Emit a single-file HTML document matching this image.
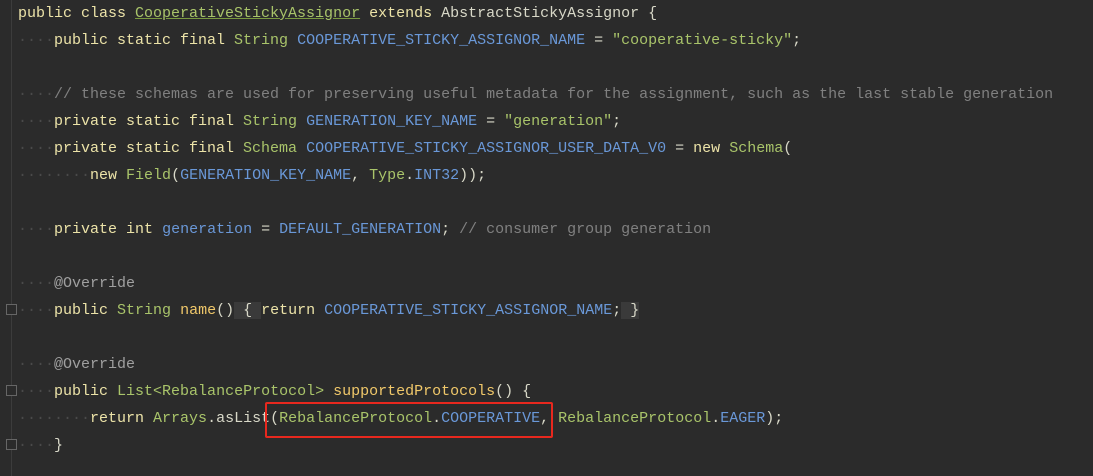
<!DOCTYPE html>
<html><head><meta charset="utf-8"><style>
html,body{margin:0;padding:0;background:#2b2b2b;width:1093px;height:476px;overflow:hidden}
pre{margin:0;position:absolute;left:18px;top:0;font-family:"Liberation Mono",monospace;font-size:15px;line-height:27px;color:#d8d8c8;letter-spacing:0}
.k{color:#ece3a8}.t{color:#a9c46a}.c{color:#6a98d8}.s{color:#a9c46a}.m{color:#808080}.f{color:#f0c86a}.a{color:#a0a0a0}.d{color:#4a4a4a}
.u{text-decoration:underline;text-decoration-color:#7a9a40}
.gut{position:absolute;left:11px;top:0;width:1px;height:476px;background:#3c3c3c}
.box{position:absolute;left:265px;top:402px;width:284px;height:32px;border:2px solid #e8281e;border-radius:2px}
.fold{position:absolute;left:6px;width:11px;height:11px;border:1px solid #666;box-sizing:border-box;background:#2b2b2b}
.hl{background:#3a3a3a}
</style></head><body>
<div class="gut"></div>
<div class="fold" style="top:304px"></div>
<div class="fold" style="top:385px"></div>
<div class="fold" style="top:439px"></div>
<pre><span class="k">public class </span><span class="t u">CooperativeStickyAssignor</span> <span class="k">extends</span> AbstractStickyAssignor {
<span class="d">····</span><span class="k">public static final </span><span class="t">String</span> <span class="c">COOPERATIVE_STICKY_ASSIGNOR_NAME</span> = <span class="s">"cooperative-sticky"</span>;

<span class="d">····</span><span class="m">// these schemas are used for preserving useful metadata for the assignment, such as the last stable generation</span>
<span class="d">····</span><span class="k">private static final </span><span class="t">String</span> <span class="c">GENERATION_KEY_NAME</span> = <span class="s">"generation"</span>;
<span class="d">····</span><span class="k">private static final </span><span class="t">Schema</span> <span class="c">COOPERATIVE_STICKY_ASSIGNOR_USER_DATA_V0</span> = <span class="k">new</span> <span class="t">Schema</span>(
<span class="d">········</span><span class="k">new</span> <span class="t">Field</span>(<span class="c">GENERATION_KEY_NAME</span>, <span class="t">Type</span>.<span class="c">INT32</span>));

<span class="d">····</span><span class="k">private int</span> <span class="c">generation</span> = <span class="c">DEFAULT_GENERATION</span>; <span class="m">// consumer group generation</span>

<span class="d">····</span><span class="a">@Override</span>
<span class="d">····</span><span class="k">public</span> <span class="t">String</span> <span class="f">name</span>()<span class="hl"> { </span><span class="k">return</span> <span class="c">COOPERATIVE_STICKY_ASSIGNOR_NAME</span>;<span class="hl"> }</span>

<span class="d">····</span><span class="a">@Override</span>
<span class="d">····</span><span class="k">public</span> <span class="t">List&lt;RebalanceProtocol&gt;</span> <span class="f">supportedProtocols</span>() {
<span class="d">········</span><span class="k">return</span> <span class="t">Arrays</span>.asList(<span class="t">RebalanceProtocol</span>.<span class="c">COOPERATIVE</span>, <span class="t">RebalanceProtocol</span>.<span class="c">EAGER</span>);
<span class="d">····</span>}</pre>
<div class="box"></div>
</body></html>
